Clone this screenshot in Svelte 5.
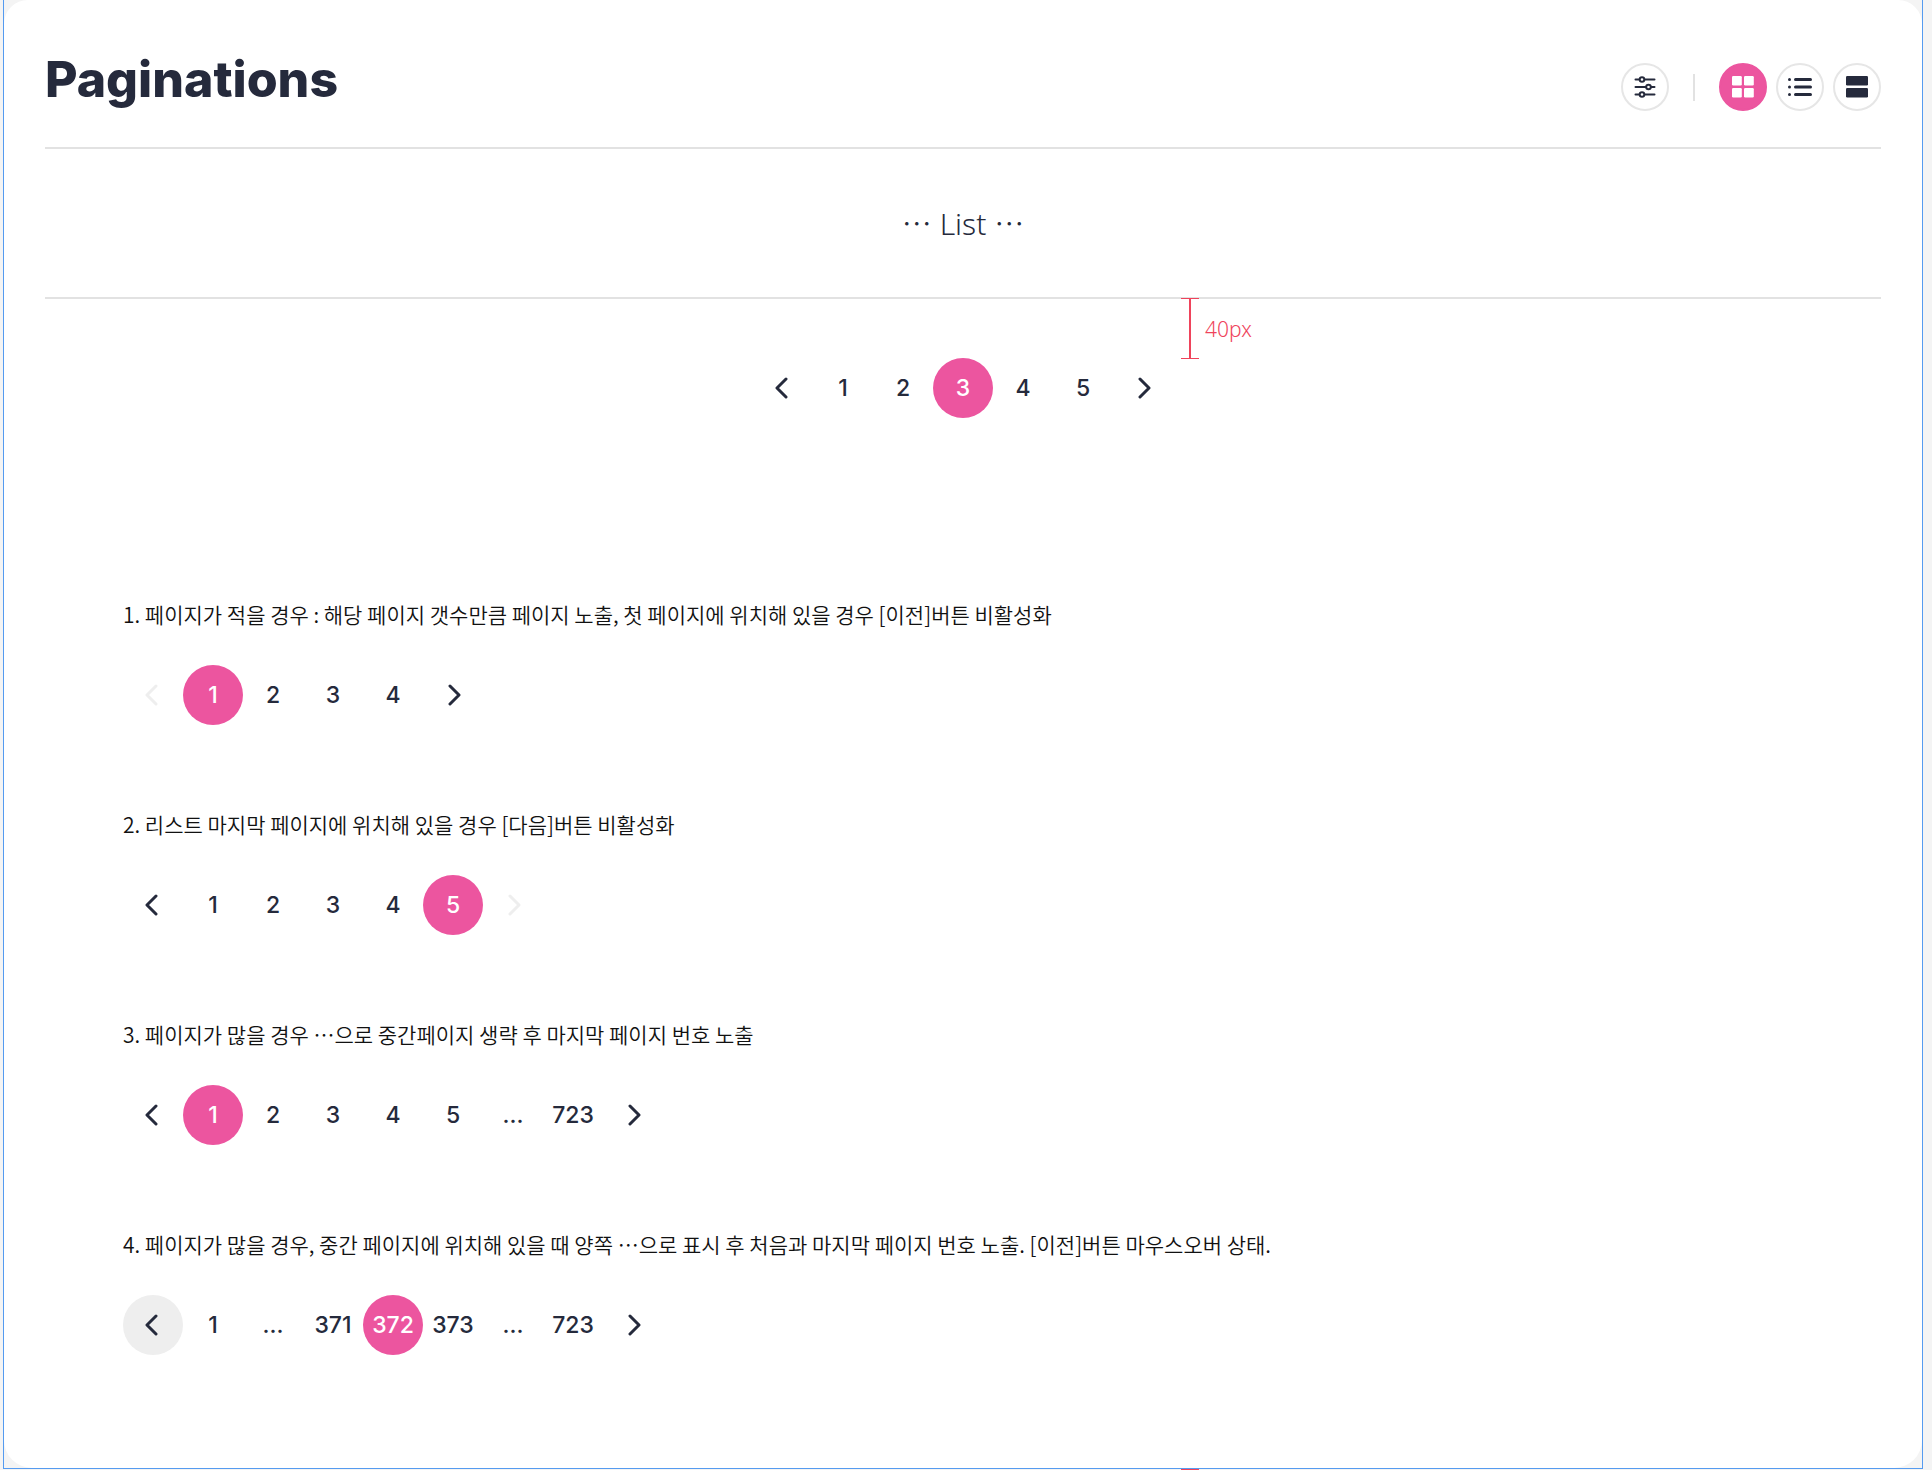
<script>
  const examples = [
    {
      text: '1. 페이지가 적을 경우 : 해당 페이지 갯수만큼 페이지 노출, 첫 페이지에 위치해 있을 경우 [이전]버튼 비활성화',
      pages: ['1', '2', '3', '4'],
      current: '1',
      prevDisabled: true,
    },
    {
      text: '2. 리스트 마지막 페이지에 위치해 있을 경우 [다음]버튼 비활성화',
      pages: ['1', '2', '3', '4', '5'],
      current: '5',
      nextDisabled: true,
    },
    {
      text: '3. 페이지가 많을 경우 ⋯으로 중간페이지 생략 후 마지막 페이지 번호 노출',
      pages: ['1', '2', '3', '4', '5', '...', '723'],
      current: '1',
    },
    {
      text: '4. 페이지가 많을 경우, 중간 페이지에 위치해 있을 때 양쪽 ⋯으로 표시 후 처음과 마지막 페이지 번호 노출. [이전]버튼 마우스오버 상태.',
      pages: ['1', '...', '371', '372', '373', '...', '723'],
      current: '372',
      prevHover: true,
    },
  ];
</script>

{#snippet pagination(p)}
  <nav class="pagination" aria-label="Pagination">
    <button class="page" class:hovered={p.prevHover} disabled={p.prevDisabled} aria-label="이전">
      <svg width="16" height="24" viewBox="0 0 16 24"><path d="M11 3 2 12l9 9" /></svg>
    </button>
    {#each p.pages as page}
      {#if page === '...'}
        <span class="page">...</span>
      {:else}
        <button class="page" class:current={page === p.current} aria-current={page === p.current ? 'page' : undefined}>{page}</button>
      {/if}
    {/each}
    <button class="page" disabled={p.nextDisabled} aria-label="다음">
      <svg width="16" height="24" viewBox="0 0 16 24"><path d="m5 3 9 9-9 9" /></svg>
    </button>
  </nav>
{/snippet}

<div class="canvas">
  <div class="frame">
    <main class="card">
      <header>
        <h1>Paginations</h1>
        <div class="tools">
          <button class="tool" aria-label="Filter">
            <svg class="sliders" width="22" height="22" viewBox="0 0 22 22">
              <path d="M1.5 3.5h19M1.5 11h19M1.5 18.5h19" />
              <circle cx="8" cy="3.5" r="2.3" />
              <circle cx="14.5" cy="11" r="2.3" />
              <circle cx="8" cy="18.5" r="2.3" />
            </svg>
          </button>
          <span class="divider"></span>
          <div class="views">
            <button class="tool active" aria-label="Grid view" aria-pressed="true">
              <svg width="22" height="22" viewBox="0 0 22 22">
                <rect width="9.8" height="9.5" rx="1.2" />
                <rect x="12" width="9.8" height="9.5" rx="1.2" />
                <rect y="12" width="9.8" height="9.5" rx="1.2" />
                <rect x="12" y="12" width="9.8" height="9.5" rx="1.2" />
              </svg>
            </button>
            <button class="tool" aria-label="List view">
              <svg width="24" height="22" viewBox="0 0 24 22">
                <circle cx="1.5" cy="3.5" r="1.5" />
                <circle cx="1.5" cy="11" r="1.5" />
                <circle cx="1.5" cy="18.5" r="1.5" />
                <rect x="6" y="2" width="18" height="3" rx="1.5" />
                <rect x="6" y="9.5" width="18" height="3" rx="1.5" />
                <rect x="6" y="17" width="18" height="3" rx="1.5" />
              </svg>
            </button>
            <button class="tool" aria-label="Card view">
              <svg width="22" height="22" viewBox="0 0 22 22">
                <rect width="22" height="9.5" rx="1.2" />
                <rect y="12" width="22" height="9.5" rx="1.2" />
              </svg>
            </button>
          </div>
        </div>
      </header>

      <div class="list" lang="ko">⋯ List ⋯</div>

      <section class="demo">
        {@render pagination({ pages: ['1', '2', '3', '4', '5'], current: '3' })}
        <div class="measure"><i class="bracket"></i><span>40px</span></div>
      </section>

      <div class="examples">
        {#each examples as example}
          <section>
            <p>{example.text}</p>
            {@render pagination(example)}
          </section>
        {/each}
      </div>
    </main>
  </div>
  <i class="tick"></i>
</div>

<style>
  :global(body) {
    margin: 0;
    background: #f4f4f4;
  }
  .canvas {
    position: relative;
    padding: 0 9px 1px 3px;
    overflow: hidden;
    color: #252a3c;
    font-family: Inter, 'Noto Sans CJK KR', sans-serif;
  }
  .frame {
    border: solid #559bf0;
    border-width: 0 1px 1px;
  }
  .card {
    padding: 0 41px 113px;
    border-radius: 24px 24px 28px 28px;
    background: #fff;
  }
  header {
    display: flex;
    align-items: center;
    justify-content: space-between;
    height: 147px;
    border-bottom: 2px solid #e2e2e2;
  }
  h1 {
    margin: 10px 0 0;
    font-size: 50px;
    line-height: 60px;
    font-weight: 800;
  }
  .tools,
  .views {
    display: flex;
    align-items: center;
  }
  .tools {
    gap: 24px;
    margin-top: 27px;
  }
  .views {
    gap: 9px;
  }
  .divider {
    width: 2px;
    height: 27px;
    background: #e2e2e2;
  }
  button {
    padding: 0;
    border: 0;
    background: none;
    color: inherit;
    font: inherit;
  }
  .tool {
    display: grid;
    place-items: center;
    width: 48px;
    height: 48px;
    border: 2px solid #e6e6e6;
    border-radius: 50%;
    box-sizing: border-box;
  }
  .tool svg {
    fill: currentColor;
  }
  .tool .sliders {
    fill: #fff;
    stroke: currentColor;
    stroke-width: 2;
    stroke-linecap: round;
  }
  .tool.active {
    border-color: #ec559f;
    background: #ec559f;
    color: #fff;
  }
  .list {
    padding: 57px 0 55px;
    border-bottom: 2px solid #e2e2e2;
    font-family: 'Noto Sans', 'Noto Sans CJK KR', sans-serif;
    font-size: 30px;
    font-weight: 300;
    line-height: 36px;
    text-align: center;
  }
  .demo {
    position: relative;
    display: flex;
    justify-content: center;
    padding-top: 59px;
  }
  .measure {
    position: absolute;
    top: -1px;
    left: calc(50% + 218px);
    display: flex;
    align-items: center;
    gap: 6px;
    height: 61px;
    color: #ef435b;
    font-family: 'Noto Sans', sans-serif;
    font-size: 21px;
    font-weight: 300;
  }
  .bracket {
    width: 18px;
    height: 59px;
    border: solid #ef435b;
    border-width: 1px 0;
    background: linear-gradient(#ef435b, #ef435b) center / 2px 100% no-repeat;
  }
  .tick {
    position: absolute;
    bottom: 0;
    left: calc(50% + 215px);
    width: 18px;
    height: 1px;
    background: #ef435b;
  }
  .pagination {
    display: flex;
  }
  .page {
    display: grid;
    place-items: center;
    width: 60px;
    height: 60px;
    border-radius: 50%;
    font-size: 23px;
    font-weight: 500;
    line-height: 30px;
  }
  .page svg {
    fill: none;
    stroke: currentColor;
    stroke-width: 3;
    stroke-linecap: round;
    stroke-linejoin: round;
  }
  .page:disabled {
    color: #eee;
  }
  .hovered {
    background: #eee;
  }
  .current {
    background: #ec559f;
    color: #fff;
  }
  .examples {
    display: grid;
    gap: 84px;
    padding: 181px 0 0 78px;
  }
  p {
    margin: 0 0 36px;
    color: #111;
    font-family: 'Noto Sans CJK KR', sans-serif;
    font-size: 21px;
    font-weight: 350;
    line-height: 30px;
  }
</style>
